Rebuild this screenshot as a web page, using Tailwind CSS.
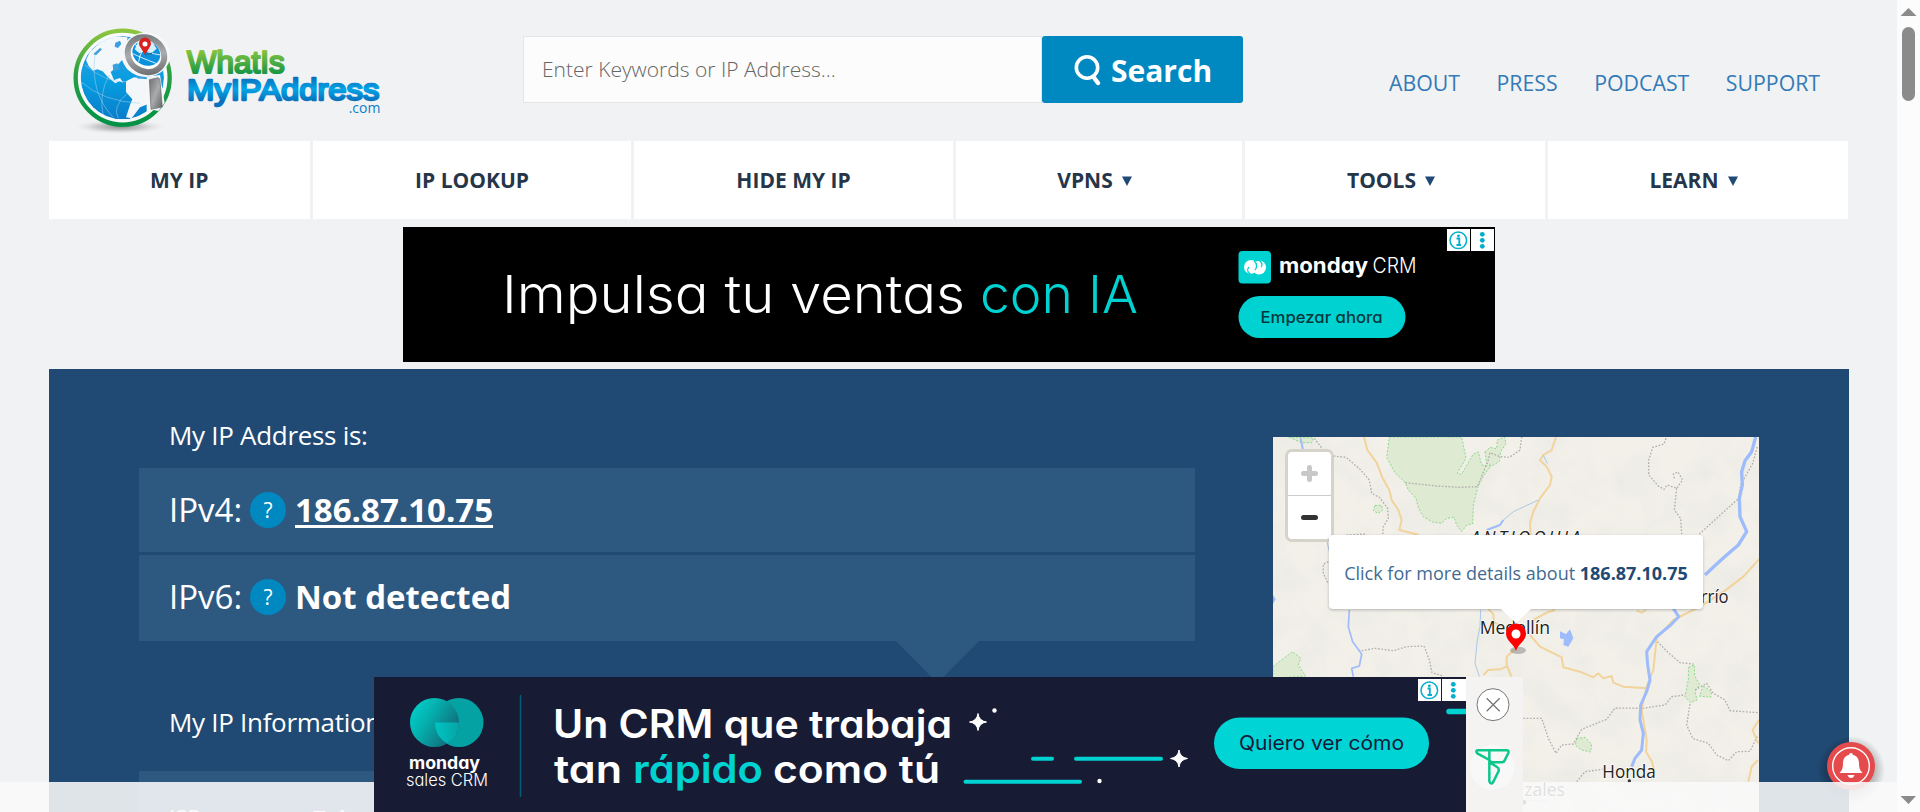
<!DOCTYPE html>
<html lang="en">
<head>
<meta charset="utf-8">
<title>What Is My IP Address</title>
<script src="https://cdn.jsdelivr.net/npm/@tailwindcss/browser@4"></script>
</head>
<body class="relative flex h-[812px] w-[1920px] overflow-hidden bg-[#f1f2f4] font-['Open_Sans','Noto_Sans',sans-serif]">

<div class="h-[812px] w-[1897px] overflow-hidden px-[48.5px]">
  <header class="flex h-[141px] items-start">
    <svg class="mt-[25px] ml-[21.5px] h-[110px] w-[312px] shrink-0" viewBox="90 45 936 330">
      <defs>
        <linearGradient id="ring" x1="0" y1="0" x2="0" y2="1"><stop offset="0" stop-color="#8cc63f"/><stop offset=".45" stop-color="#2b9f45"/><stop offset="1" stop-color="#009245"/></linearGradient>
        <linearGradient id="sea" x1="0" y1="0" x2="0" y2="1"><stop offset="0" stop-color="#3aa0e2"/><stop offset=".55" stop-color="#069de0"/><stop offset="1" stop-color="#0a7dca"/></linearGradient>
        <linearGradient id="steel" x1="0" y1="0" x2="1" y2="1"><stop offset="0" stop-color="#6d6e70"/><stop offset=".5" stop-color="#a9abad"/><stop offset="1" stop-color="#606163"/></linearGradient>
        <linearGradient id="wg" gradientUnits="userSpaceOnUse" x1="0" y1="118" x2="0" y2="198"><stop offset="0" stop-color="#8cc63f"/><stop offset="1" stop-color="#0b9245"/></linearGradient>
        <linearGradient id="wb" gradientUnits="userSpaceOnUse" x1="0" y1="200" x2="0" y2="295"><stop offset="0" stop-color="#0a6cb8"/><stop offset=".4" stop-color="#05a3e6"/><stop offset=".75" stop-color="#0a72bd"/></linearGradient>
        <radialGradient id="shade"><stop offset="0" stop-color="#8c8c8c"/><stop offset=".5" stop-color="#bbbcbd" stop-opacity=".75"/><stop offset="1" stop-color="#f1f2f4" stop-opacity="0"/></radialGradient>
        <clipPath id="globe"><circle cx="247" cy="203" r="125"/></clipPath>
      </defs>
      <ellipse cx="240" cy="350" rx="140" ry="23" fill="url(#shade)"/>
      <circle cx="248" cy="203" r="141" fill="#f8f9fa" stroke="url(#ring)" stroke-width="13"/>
      <g clip-path="url(#globe)">
        <circle cx="247" cy="203" r="125" fill="url(#sea)"/>
        <path d="M146 168 L138 150 L150 125 L186 92 L225 78 L262 82 L262 140 L285 190 L262 178 L246 150 L222 178 L212 186 L222 210 L240 204 L250 218 L238 214 L226 220 L204 202 L188 184 L172 178 L160 182 Z" fill="#f4f7fa"/>
        <path d="M258 214 L282 202 L320 208 L335 228 L330 280 L300 292 L275 325 L258 322 L270 285 L277 268 L258 246 Z" fill="#f4f7fa"/>
        <path d="M226 98 l14-6 l4 10 l-10 12 l-10 -4z M218 164 l14-4 l8 18 l-20 6z M272 176 l30 18 l22 10 l-30 2z M160 132 l20 -18 l6 4 l-18 18z" fill="#3aa0e2"/>
        <g fill="none" stroke="#9cd0f0" stroke-width="1.600"><path d="M122 215 Q190 275 300 280"/><path d="M135 165 Q200 220 262 215"/><path d="M165 135 Q150 250 220 322"/><path d="M208 195 Q175 250 190 320"/><path d="M262 250 Q215 290 235 325"/></g>
      </g>
      <path d="M374 278 A146 146 0 0 1 355 303 L330 298 L320 308 L320 200 L360 195 Z" fill="#f6f7f8"/>
      <path d="M328 209 L354 203 Q359 203 360 212 L367 291 L333 298 Z" fill="url(#steel)" stroke="#66686a" stroke-width="2"/>
      <ellipse cx="318" cy="134" rx="73" ry="67" fill="#f6f7f8"/>
      <ellipse cx="318" cy="134" rx="57" ry="50" transform="rotate(35 318 134)" fill="#fff" stroke="url(#steel)" stroke-width="18"/>
      <ellipse cx="319" cy="130" rx="43" ry="36" transform="rotate(25 319 130)" fill="#0c91dc"/>
      <path d="M284 118 L294 96 L336 95 L350 116 L336 128 L318 122 L298 130 Z" fill="#d9effb"/>
      <path d="M277 130 Q300 142 348 160 M285 104 Q318 130 362 135 M296 155 Q300 120 332 95" fill="none" stroke="#fff" stroke-width="2.500"/>
      <path d="M315 134 L301 112 A18 18 0 1 1 329 112 Z" fill="#d8201f"/>
      <circle cx="315" cy="102" r="7.500" fill="#fff"/>
      <path d="M316 134 L336 130" stroke="#315a78" stroke-width="3"/>
      <g font-family="'Liberation Sans',Arial,sans-serif" stroke-linejoin="round" stroke-linecap="round">
        <text x="441" y="190" font-size="94" textLength="293" lengthAdjust="spacingAndGlyphs" fill="url(#wg)" stroke="url(#wg)" stroke-width="6.500">WhatIs</text>
        <text x="441" y="269" font-size="91" textLength="577" lengthAdjust="spacingAndGlyphs" fill="url(#wb)" stroke="url(#wb)" stroke-width="7">MyIPAddress</text>
      </g>
      <text x="926" y="308" font-size="43" textLength="95" lengthAdjust="spacingAndGlyphs" font-family="'Open Sans',sans-serif" fill="#0b80c8">.com</text>
    </svg>
    <form class="mt-[36px] ml-[141px] flex h-[67px] w-[720px] shrink-0">
      <div class="flex flex-1 items-center border border-[#e5e5e5] bg-[#fcfcfc] pt-px pl-[18px] text-[21px] font-light text-[#666]">Enter Keywords or IP Address...</div>
      <div class="flex w-[201px] items-center rounded-[3px] bg-[#0088c0] pl-[32px]">
        <svg class="h-[32px] w-[28px]" viewBox="0 0 28 32" fill="none" stroke="#fff"><circle cx="13" cy="13.5" r="10.7" stroke-width="3.6"/><path d="M19.5 23 L24 29" stroke-width="4.4" stroke-linecap="round"/></svg>
        <span class="ml-[9px] pt-[2px] text-[30px] font-bold text-white">Search</span>
      </div>
    </form>
    <nav class="mt-[69px] ml-[146px] flex gap-[36.500px] text-[21.300px] leading-[28px] font-medium whitespace-nowrap text-[#337ab7]">
      <a>ABOUT</a><a>PRESS</a><a>PODCAST</a><a>SUPPORT</a>
    </nav>
  </header>

  <nav class="grid h-[78px] grid-cols-[261.500px_318px_319px_286px_300px_300px] gap-[3px] text-[21px] font-bold text-[#26364a] *:flex *:items-center *:justify-center *:gap-[9px] *:bg-white *:pt-[2px]">
    <a>MY IP</a>
    <a>IP LOOKUP</a>
    <a>HIDE MY IP</a>
    <a class="pr-[9px]">VPNS<svg class="h-[10px] w-[10px]" viewBox="0 0 10 10"><path d="M0 0.5H10L5 10Z" fill="#1f4a75"/></svg></a>
    <a class="pr-[8px]">TOOLS<svg class="h-[10px] w-[10px]" viewBox="0 0 10 10"><path d="M0 0.5H10L5 10Z" fill="#1f4a75"/></svg></a>
    <a class="pr-[9px]">LEARN<svg class="h-[10px] w-[10px]" viewBox="0 0 10 10"><path d="M0 0.5H10L5 10Z" fill="#1f4a75"/></svg></a>
  </nav>

  <div class="mt-[8px] ml-[354.5px] h-[135px] w-[1092px] bg-black">
    <svg class="block h-full w-full [font-feature-settings:'cv11']" viewBox="403 227 1092 135" font-family="Inter,sans-serif">
      <g font-size="52.500" font-weight="300">
        <text x="502" y="312.500" textLength="463" lengthAdjust="spacingAndGlyphs" fill="#fff">Impulsa tu ventas</text>
        <text x="980" y="312.500" textLength="158" lengthAdjust="spacingAndGlyphs" fill="#00d2d2">con IA</text>
      </g>
      <rect x="1238.500" y="251" width="32.500" height="32.500" rx="4" fill="#00d2d2"/>
      <circle cx="1251" cy="267" r="7" fill="#fff"/><circle cx="1259" cy="267.500" r="7" fill="#fff"/>
      <path d="M1249 267 a4 4 0 0 0 6 6 M1254 261 a6 6 0 0 1 1 9 M1261 267 a4 4 0 0 0 -5 -6" fill="none" stroke="#00d2d2" stroke-width="1.300"/>
      <text x="1279" y="272.500" font-size="21" font-weight="700" textLength="89" lengthAdjust="spacingAndGlyphs" fill="#fff">monday</text>
      <text x="1372.500" y="272.500" font-size="21" font-weight="300" textLength="44" lengthAdjust="spacingAndGlyphs" fill="#fff">CRM</text>
      <rect x="1238.500" y="296" width="167" height="42" rx="21" fill="#00d2d2"/>
      <text x="1260.500" y="322.500" font-size="16" font-weight="500" textLength="122" lengthAdjust="spacingAndGlyphs" fill="#04373b">Empezar ahora</text>
      <path d="M1447 229h23v22h-23zM1471 229h23v22h-23z" fill="#fff"/>
      <circle cx="1458.300" cy="240.300" r="8.300" fill="none" stroke="#00aecd" stroke-width="1.500"/>
      <path d="M1456.500 238.500h2.800v6.500M1456.500 245h4.500" fill="none" stroke="#00aecd" stroke-width="1.800"/><circle cx="1458.500" cy="235.800" r="1.400" fill="#00aecd"/>
      <g fill="#00aecd"><circle cx="1482.300" cy="234.300" r="2.400"/><circle cx="1482.300" cy="240.300" r="2.400"/><circle cx="1482.300" cy="246.300" r="2.400"/></g>
    </svg>
  </div>

  <main class="mt-[7px] flex h-[443px] w-[1800px] items-start bg-[#204a73] text-white">
    <section class="ml-[90.500px] w-[1056px] shrink-0">
      <h2 class="mt-[48px] pl-[30px] text-[26px] leading-[36px] tracking-[-0.3px]">My IP Address is:</h2>
      <div class="mt-[15px] flex h-[84px] items-center bg-[#2d5980] pl-[30px] text-[33px] leading-[84px]">
        <span class="w-[81px]">IPv4:</span>
        <span class="flex h-[36px] w-[36px] items-center justify-center rounded-full bg-[#0088c0] text-[21px]">?</span>
        <a class="ml-[9px] font-bold underline decoration-[3px] underline-offset-[3px]">186.87.10.75</a>
      </div>
      <div class="mt-[3px] flex h-[86px] items-center bg-[#2d5980] pb-[3px] pl-[30px] text-[33px] leading-[84px]">
        <span class="w-[81px]">IPv6:</span>
        <span class="flex h-[36px] w-[36px] items-center justify-center rounded-full bg-[#0088c0] text-[21px]">?</span>
        <span class="ml-[9px] font-bold">Not detected</span>
      </div>
      <svg class="ml-[756px] block h-[42px] w-[86px]" viewBox="0 0 86 42"><path d="M1 0H84L42.500 42Z" fill="#2d5980"/></svg>
      <h2 class="mt-[21px] pl-[30px] text-[26px] leading-[36px] tracking-[-0.3px]">My IP Information:</h2>
      <div class="mt-[31px] flex h-[60px] bg-[#2d5980] pt-[31px] pl-[30px] text-[22px] leading-[30px]"><span class="w-[144px]">ISP:</span><b>Telmex</b></div>
    </section>

    <section class="relative mt-[68px] ml-[78px] h-[375px] w-[486px] overflow-hidden bg-[#f2f0e9]">
      <svg class="block h-full w-full" viewBox="39 21 1458 1125">
        <defs>
          <filter id="relief" x="0" y="0" width="100%" height="100%"><feTurbulence type="fractalNoise" baseFrequency=".01" numOctaves="4" seed="8"/><feColorMatrix values="0 0 0 0 .82  0 0 0 0 .81  0 0 0 0 .77  1.3 1.3 0 0 -1.05"/></filter>
        </defs>
        <rect x="39" y="21" width="1458" height="1125" filter="url(#relief)" opacity=".75"/>
        <g fill="#dfead3" stroke="#8ed88c" stroke-width="3" stroke-dasharray="6 5" stroke-linejoin="round">
          <path d="M388 21 L605 21 L612 55 L618 85 L592 130 L605 132 L640 72 L655 66 L665 105 L692 108 L672 135 L652 175 L640 225 L638 282 L622 284 L604 305 L590 285 L582 262 L560 265 L545 280 L518 276 L490 260 L476 235 L468 205 L445 180 L436 158 L405 128 L380 82 Z"/>
          <path d="M675 66 L690 52 L710 56 L712 30 L734 21 L738 40 L722 66 L718 94 L696 108 L680 100 Z"/>
          <path d="M345 226 L365 226 L368 240 L354 250 L340 242 Z"/>
          <path d="M39 710 L75 682 L97 665 L122 684 L115 705 L137 738 L39 745 Z"/>
          <path d="M85 21 L160 24 L155 38 L125 38 Z"/>
          <path d="M1286 712 L1303 704 L1304 738 L1319 764 L1305 785 L1311 810 L1292 818 L1275 800 L1285 750 Z M1330 768 L1356 786 L1352 802 L1318 798 Z"/>
          <path d="M950 925 L975 922 L995 942 L992 966 L965 960 L946 946 Z"/>
        </g>
        <g fill="none" stroke="#aeaeab" stroke-width="4" stroke-dasharray="5 5" stroke-linejoin="round">
          <path d="M163 25 L190 60 L220 78 L258 82 L300 118 L328 150 L335 190 L358 202 L383 235 L385 265 L370 290 L368 312"/>
          <path d="M436 158 L530 168 L600 172 L652 170 L685 90 L690 68 L720 80 L748 82 L780 60 L785 21"/>
          <path d="M1218 25 L1212 42 L1178 52 L1166 90 L1166 135 L1195 168 L1212 178 L1222 165 L1250 175 L1268 150 L1254 126 L1240 132 L1244 148 M1250 175 L1243 240 L1262 265 L1265 312 M1318 312 L1436 205 L1442 165 L1478 100 L1492 50"/>
          <path d="M260 315 L320 312 M205 395 L190 402 L190 430 L205 462"/>
          <path d="M305 662 L345 655 L400 662 L440 650 L492 648 L508 690 L516 728 L550 738"/>
          <path d="M1192 635 L1225 668 L1260 698 L1300 702"/>
          <path d="M1305 780 L1340 760 L1360 790 L1395 810 L1410 842 L1494 848"/>
          <path d="M790 865 L845 865 L865 925 L888 970 L905 945 L940 942 L965 898 L1040 868 L1065 834 L1150 835 L1215 825 L1235 800 L1275 795"/>
          <path d="M1290 822 L1280 885 L1298 925 L1345 940 L1370 975 L1405 992 L1430 965 L1470 964 L1494 915"/>
          <path d="M950 1055 L975 1025 L1028 1018 M800 1110 L870 1115"/>
        </g>
        <g fill="none" stroke="#f2d39b" stroke-width="6" stroke-linejoin="round">
          <path d="M312 21 L322 60 L350 98 L368 145 L388 180 L395 210 L415 240 L425 270 L418 300 L475 314"/>
          <path d="M888 21 L875 60 L850 75 L840 90 L860 110 L875 140 L870 165 L840 205 L820 245 L810 280 L812 315"/>
          <path d="M685 538 L700 552 L702 578 L730 590 M885 540 L860 548 L820 570 M1130 542 L1145 548 L1158 540"/>
          <path d="M768 655 L740 680 L740 705 L755 741 M740 710 L720 718 L685 720 L670 735"/>
          <path d="M810 615 L840 650 L905 682 L910 712 L960 725 L1000 742 L1015 730 L1030 745 L1055 738 L1060 758 L1090 770 L1162 775"/>
          <path d="M1497 388 L1450 440 L1395 482 L1320 530 L1240 570 L1190 625 L1180 720 L1158 775 L1145 840 L1160 930 L1158 965 L1176 995 L1184 1030"/>
          <path d="M1497 870 L1478 900 L1494 940 M1494 990 L1475 1010 L1465 1055"/>
        </g>
        <g fill="none" stroke="#9ebcfb" stroke-linejoin="round">
          <path d="M1487 21 L1475 65 L1455 92 L1445 125 L1447 165 L1438 205 L1440 260 L1460 305 L1435 345 L1400 375 L1370 402 L1335 435" stroke-width="10"/>
          <path d="M1240 535 L1256 560 L1232 585 L1190 620 L1160 665 L1163 705 L1170 750 L1160 785 L1142 825 L1140 870 L1150 910 L1145 960 L1125 985 L1115 1010" stroke-width="9"/>
          <path d="M268 540 L265 590 L278 635 L305 672 L298 708 L275 715 L280 740" stroke-width="5"/>
          <path d="M122 25 L130 65 M680 300 L720 285 L730 270" stroke-width="6"/>
          <path d="M730 270 L760 245 L835 210 M850 76 L862 100 M662 540 L660 590 L652 630 L645 700 L658 740 M200 330 L208 365" stroke-width="3" stroke="#aac8e8"/>
        </g>
        <path d="M900 604 L918 612 L930 598 L940 625 L925 650 L910 645 L912 628 L900 625Z M39 495 L47 508 L39 522Z" fill="#9ebcfb"/>
        <g font-family="'Open Sans','Noto Sans',sans-serif" fill="#222" stroke="#fff" stroke-width="5" stroke-opacity=".8" paint-order="stroke">
          <text x="632" y="342" font-size="52" font-style="italic" textLength="330">ANTIOQUIA</text>
          <text x="659" y="613" font-size="54" textLength="211" lengthAdjust="spacingAndGlyphs">Medellín</text>
          <text x="1406" y="518" font-size="54" text-anchor="end" textLength="144" lengthAdjust="spacingAndGlyphs">Berrío</text>
          <text x="1027" y="1044" font-size="54" textLength="160" lengthAdjust="spacingAndGlyphs">Honda</text>
          <text x="670" y="1099" font-size="54" textLength="245" lengthAdjust="spacingAndGlyphs">Manizales</text>
        </g>
        <circle cx="792" cy="1117" r="7" fill="#333"/><circle cx="1108" cy="1053" r="5" fill="#333"/>
        <ellipse cx="774" cy="661" rx="24" ry="11" fill="#777" opacity=".45"/>
      </svg>
      <div class="absolute top-[12px] left-[12px] flex h-[93px] w-[49px] flex-col rounded-[7px] border-[3px] border-[#d5d3ca] bg-white">
        <svg viewBox="0 0 43 87" class="h-full w-full" fill="none" stroke-linecap="round"><path d="M15.500 21.500H27.500M21.500 15.500V27.500" stroke="#c8c8c8" stroke-width="5"/><path d="M0 43.500H43" stroke="#ccc"/><path d="M15.500 65.500H27.500" stroke="#333" stroke-width="5"/></svg>
      </div>
      <div class="absolute top-[98px] left-[56px] flex h-[74px] w-[374px] items-center justify-center rounded-[4px] bg-white pt-[3px] text-[18px] whitespace-nowrap text-[#426b92] shadow-[0_1px_3px_rgba(0,0,0,.25)]"><span>Click for more details about <b class="text-[#204a73]">186.87.10.75</b></span></div>
      <svg class="absolute top-[171px] left-[227px] h-[45px] w-[32px]" viewBox="0 0 32 45"><path d="M1 1H31L16 15Z" fill="#fff"/><path d="M16 43 C14 36 6 33 6 25.500 A10 10 0 0 1 26 25.500 C26 33 18 36 16 43Z" fill="#f00"/><circle cx="16" cy="26" r="4.500" fill="#fff"/></svg>
    </section>
  </main>
</div>

<aside class="h-[812px] w-[23px] bg-[#fcfcfc]">
  <svg class="block h-full w-full" viewBox="0 0 23 812" fill="#8b8b8b"><path d="M3.500 16 L11.500 8 L19.500 16Z"/><rect x="5" y="27" width="13" height="74" rx="6.500"/><path d="M3.500 796H19L11.500 804Z"/></svg>
</aside>

<svg class="absolute top-[736px] left-[1815px] h-[72px] w-[72px]" viewBox="0 0 72 72">
  <defs><radialGradient id="glow"><stop offset=".6" stop-color="#000" stop-opacity=".3"/><stop offset="1" stop-color="#000" stop-opacity="0"/></radialGradient></defs>
  <circle cx="36" cy="34" r="34" fill="url(#glow)"/>
  <circle cx="36" cy="30" r="24" fill="#e54b4d"/><circle cx="36" cy="30" r="18.300" fill="none" stroke="#fff" stroke-width="1.400"/>
  <path d="M24.500 37 C27.500 34 28 31 28 27 C28 22 31 19.500 34 19 A2 2 0 0 1 38 19 C41 19.500 44 22 44 27 C44 31 44.500 34 47.500 37Z M32.500 39H39.500 Q38.500 42 36 42 Q33.500 42 32.500 39Z" fill="#fff"/>
</svg>

<div class="absolute bottom-0 left-0 h-[30px] w-[1897px] bg-[#f9f9f9]/88"></div>

<div class="absolute bottom-0 left-[374px] flex h-[135px] w-[1149px] bg-[#f4f3f2]">
  <svg class="block h-[135px] w-[1092px] bg-[#181b34] [font-feature-settings:'cv11']" viewBox="374 677 1092 135" font-family="Inter,sans-serif">
    <defs>
      <linearGradient id="ml" x1="0" y1="0" x2="1" y2=".6"><stop offset="0" stop-color="#00d8d4"/><stop offset=".45" stop-color="#04b0ae"/><stop offset="1" stop-color="#126a78"/></linearGradient>
      <linearGradient id="mr" x1="0" y1="0" x2="1" y2="0"><stop offset="0" stop-color="#00c4c2"/><stop offset="1" stop-color="#05a5a6"/></linearGradient>
    </defs>
    <circle cx="459" cy="722.500" r="24.500" fill="#05a2a3"/>
    <circle cx="434.500" cy="722.500" r="24.500" fill="url(#ml)"/>
    <path d="M435 722.500H459 A24.500 24.500 0 0 1 447 743.500 A24.500 24.500 0 0 1 435 722.500Z" fill="url(#mr)"/>
    <g fill="#fff">
      <text x="409" y="769" font-size="17" font-weight="700" textLength="71" lengthAdjust="spacingAndGlyphs">monday</text>
      <text x="406" y="786" font-size="17" font-weight="300" textLength="82" lengthAdjust="spacingAndGlyphs">sales CRM</text>
      <text x="553" y="738" font-size="39" font-weight="600" textLength="399" lengthAdjust="spacingAndGlyphs">Un CRM que trabaja</text>
      <text x="554" y="783" font-size="39" font-weight="600" textLength="68" lengthAdjust="spacingAndGlyphs">tan</text>
      <text x="633" y="783" font-size="39" font-weight="600" textLength="130" lengthAdjust="spacingAndGlyphs" fill="#00d2d2">rápido</text>
      <text x="773" y="783" font-size="39" font-weight="600" textLength="167" lengthAdjust="spacingAndGlyphs">como tú</text>
      <path d="M978 713.500 Q979 721 986.500 722 Q979 723 978 730.500 Q977 723 969.500 722 Q977 721 978 713.500Z M1179 750 Q1180 757.500 1187.500 758.500 Q1180 759.500 1179 767 Q1178 759.500 1170.500 758.500 Q1178 757.500 1179 750Z" stroke="#fff" stroke-width="1"/>
      <circle cx="994.500" cy="710.500" r="2.200"/><circle cx="1099.500" cy="781" r="2.200"/>
    </g>
    <path d="M520.500 695V797" stroke="#045d78" stroke-width="1.500"/>
    <g stroke="#00d2d2" stroke-width="4.500" stroke-linecap="round"><path d="M1033 758.700H1052M1076 758.700H1161M965.500 781.700H1080" stroke-width="4"/><path d="M1449 711.500H1470" stroke-width="5.500"/></g>
    <rect x="1214" y="717.500" width="215" height="51.500" rx="25.700" fill="#00d4d4"/>
    <text x="1239" y="750" font-size="20" font-weight="400" textLength="165" lengthAdjust="spacingAndGlyphs" fill="#15193a">Quiero ver cómo</text>
    <path d="M1418 679h23v22h-23zM1442 679h24v22h-24z" fill="#fff"/>
    <circle cx="1429.300" cy="690.300" r="8.300" fill="none" stroke="#00aecd" stroke-width="1.500"/>
    <path d="M1427.500 688.500h2.300v6.500M1427.500 695h4.500" fill="none" stroke="#00aecd" stroke-width="1.800"/><circle cx="1429.300" cy="685.800" r="1.400" fill="#00aecd"/>
    <g fill="#00aecd"><circle cx="1453.300" cy="684.300" r="2.400"/><circle cx="1453.300" cy="690.300" r="2.400"/><circle cx="1453.300" cy="696.300" r="2.400"/></g>
  </svg>
  <svg class="block h-[135px] w-[57px]" viewBox="618 741 171 405" fill="none">
    <circle cx="699" cy="824" r="48" fill="#fff" stroke="#777" stroke-width="3"/>
    <path d="M680 805L719 844M719 805L680 844" stroke="#777" stroke-width="4"/>
    <circle cx="697" cy="1012" r="67" fill="#f8f8f8"/>
    <path d="M654 961H739Q748 961 745 969L734 991Q732 997 724 997H694L688 990L652 970Q645 962 654 961ZM688 963V1054Q692 1065 699 1057L716 1023Q718 1015 711 1011L688 996" stroke="#0cc78c" stroke-width="7.500" stroke-linejoin="round"/>
  </svg>
</div>
</body>
</html>
